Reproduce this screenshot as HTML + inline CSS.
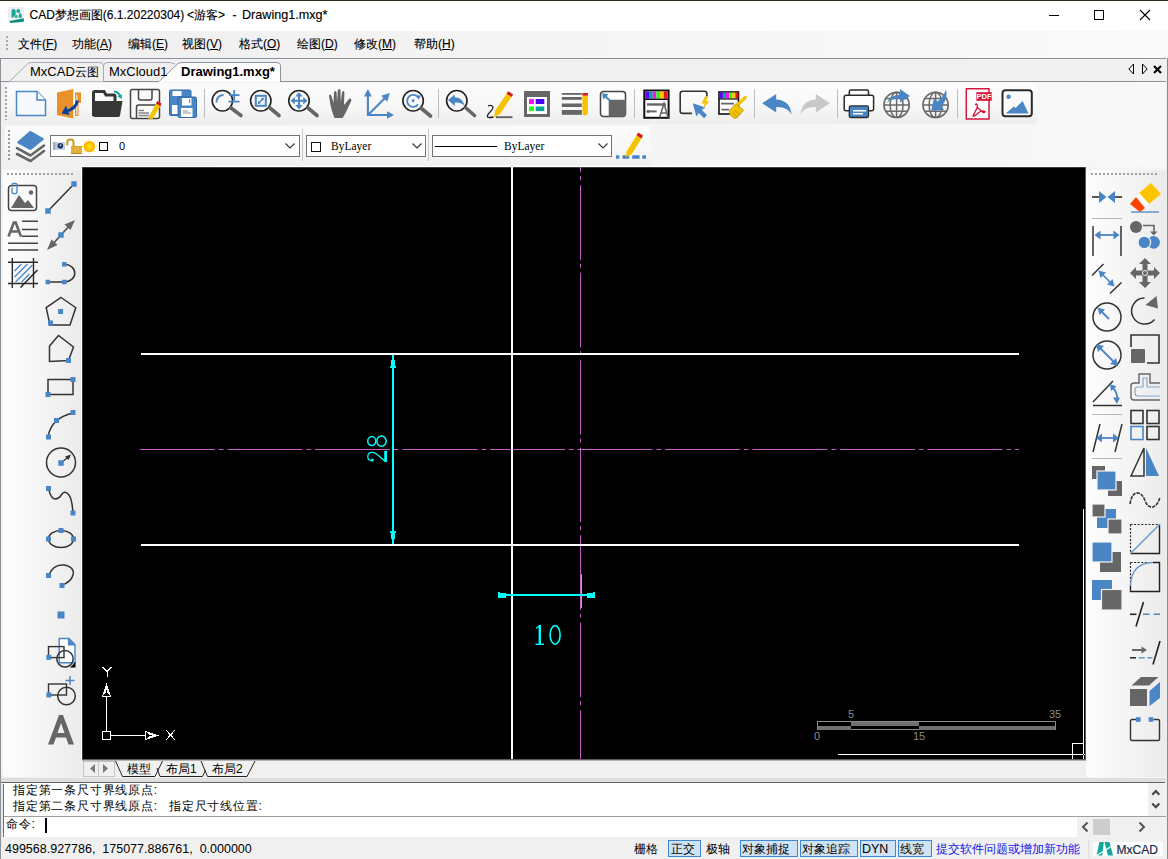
<!DOCTYPE html>
<html><head><meta charset="utf-8"><style>
html,body{margin:0;padding:0;}
body{width:1168px;height:859px;position:relative;overflow:hidden;background:#f0f0f0;font-family:"Liberation Sans",sans-serif;color:#000;}
.a{position:absolute;}
.t{position:absolute;white-space:nowrap;line-height:1;}
svg{position:absolute;overflow:visible;}

</style></head><body>
<div class="a" style="left:0;top:0;width:1168px;height:1px;background:#2c2c1c"></div>
<div class="a" style="left:0;top:1px;width:1168px;height:30px;background:#fff"></div>
<svg style="left:0;top:0" width="30" height="30" viewBox="0 0 30 30">
<rect x="8" y="7" width="16" height="15.5" fill="#efefef"/>
<path d="M11.5 17.5V11Q11.8 9 13.5 9Q15.5 9 15.6 11L15.8 14.5L12.8 17.8Z" fill="#17a897"/>
<path d="M16.5 12.5V10.5Q16.8 9 18.3 9Q20 9.2 20.2 11L19.5 13Z" fill="#17a897"/>
<path d="M18.6 17.7L18.8 14.5Q19.5 12.8 20.8 13.3Q22 14 21.8 17.7Z" fill="#17a897"/>
<path d="M14.2 17.7L15.2 15.5Q16.5 14.5 17.5 15.5L17.6 17.7Z" fill="#17a897"/>
<path d="M9.5 21L23.8 18.2V21.8L10.2 23Z" fill="#0e8c80"/>
</svg>
<div class="t" style="left:29.5px;top:9px;font-size:12px;-webkit-text-stroke:0.15px #000">CAD梦想画图(6.1.20220304)</div>
<div class="t" style="left:187px;top:9px;font-size:12px;-webkit-text-stroke:0.15px #000">&lt;游客&gt;</div>
<div class="t" style="left:232.5px;top:9px;font-size:12px;-webkit-text-stroke:0.15px #000">-</div>
<div class="t" style="left:242px;top:9px;font-size:12.6px;-webkit-text-stroke:0.15px #000">Drawing1.mxg*</div>
<div class="a" style="left:1049px;top:15px;width:10px;height:1px;background:#000"></div>
<div class="a" style="left:1094px;top:10px;width:8px;height:8px;border:1px solid #000"></div>
<svg style="left:1140px;top:10px" width="10" height="10" viewBox="0 0 10 10"><path d="M0 0L10 10M10 0L0 10" stroke="#000" stroke-width="1.1"/></svg>

<div class="a" style="left:0;top:31px;width:1168px;height:27px;background:linear-gradient(to right,#eeeeee,#f4f4f4 40%,#fafafa)"></div>
<div class="a" style="left:6px;top:36px;width:2px;height:15px;background:repeating-linear-gradient(#a8a8a8 0 2px,transparent 2px 4px)"></div>
<div class="t" style="left:18px;top:38px;font-size:12px;-webkit-text-stroke:0.12px #000">文件(<u>F</u>)</div>
<div class="t" style="left:72px;top:38px;font-size:12px;-webkit-text-stroke:0.12px #000">功能(<u>A</u>)</div>
<div class="t" style="left:128px;top:38px;font-size:12px;-webkit-text-stroke:0.12px #000">编辑(<u>E</u>)</div>
<div class="t" style="left:182px;top:38px;font-size:12px;-webkit-text-stroke:0.12px #000">视图(<u>V</u>)</div>
<div class="t" style="left:239px;top:38px;font-size:12px;-webkit-text-stroke:0.12px #000">格式(<u>O</u>)</div>
<div class="t" style="left:297px;top:38px;font-size:12px;-webkit-text-stroke:0.12px #000">绘图(<u>D</u>)</div>
<div class="t" style="left:354px;top:38px;font-size:12px;-webkit-text-stroke:0.12px #000">修改(<u>M</u>)</div>
<div class="t" style="left:414px;top:38px;font-size:12px;-webkit-text-stroke:0.12px #000">帮助(<u>H</u>)</div>

<div class="a" style="left:0;top:58px;width:1167px;height:1px;background:#8b929b"></div>
<div class="a" style="left:0;top:58px;width:1px;height:801px;background:#8b929b"></div>
<div class="a" style="left:1166px;top:58px;width:1px;height:801px;background:#f0f0f0"></div><div class="a" style="left:1167px;top:58px;width:1px;height:801px;background:#838b95"></div>
<div class="a" style="left:1px;top:59px;width:1165px;height:22px;background:#f0f0f0"></div>
<div class="a" style="left:1px;top:81px;width:1165px;height:1px;background:#8b929b"></div>
<svg style="left:0;top:58px" width="300" height="25" viewBox="0 0 300 25">
<path d="M9.5 23.5 L28 5.5 Q30 4.5 33 4.5 H100 Q103 4.5 103.5 8 V23.5" fill="#f0f0f0" stroke="#a7abb0" stroke-width="1"/>
<path d="M103.5 23.5 V8 Q104 4.5 107 4.5 H170 L175 6" fill="#f0f0f0" stroke="#a7abb0" stroke-width="1"/>
<path d="M159 23.5 L178 5.5 Q180 4.5 183 4.5 H276 Q280.5 4.5 280.5 8 V23.5 Z" fill="#fdfdfd" stroke="#8b929b" stroke-width="1"/>
<rect x="159" y="23" width="121" height="2" fill="#fdfdfd"/>
</svg>
<div class="t" style="left:30px;top:65px;font-size:13px">MxCAD<span style="font-size:12px">云图</span></div>
<div class="t" style="left:109px;top:65px;font-size:13px">MxCloud1</div>
<div class="t" style="left:181px;top:65px;font-size:13px;font-weight:bold">Drawing1.mxg*</div>
<svg style="left:1128px;top:63px" width="36" height="12" viewBox="0 0 36 12">
<path d="M5.5 1 V11 L0.8 6 Z" fill="none" stroke="#000" stroke-width="1"/>
<path d="M14.5 1 V11 L19.2 6 Z" fill="none" stroke="#000" stroke-width="1"/>
<path d="M26 3 L33 10 M33 3 L26 10" stroke="#000" stroke-width="2"/>
</svg>

<div class="a" style="left:1px;top:82px;width:1165px;height:85px;background:linear-gradient(to right,#f0f0f0,#f4f4f4 50%,#f8f8f8)"></div>
<div class="a" style="left:5px;top:83px;width:1032px;height:41px;border-radius:4px;background:linear-gradient(#fcfcfc,#f8f8f8 50%,#ededed)"></div>
<div class="a" style="left:5px;top:87px;width:2px;height:33px;background:repeating-linear-gradient(#a0a0a0 0 2px,transparent 2px 4px)"></div>
<div class="a" style="left:204px;top:89px;width:1px;height:29px;background:#bdbdbd"></div>
<div class="a" style="left:438px;top:89px;width:1px;height:29px;background:#bdbdbd"></div>
<div class="a" style="left:634px;top:89px;width:1px;height:29px;background:#bdbdbd"></div>
<div class="a" style="left:754px;top:89px;width:1px;height:29px;background:#bdbdbd"></div>
<div class="a" style="left:837px;top:89px;width:1px;height:29px;background:#bdbdbd"></div>
<div class="a" style="left:957px;top:89px;width:1px;height:29px;background:#bdbdbd"></div>
<svg style="left:15px;top:88px" width="32" height="32" viewBox="0 0 32 32"><path d="M1.5 3.5H22L30.5 12V27.5H1.5Z" fill="#f6f8fb" stroke="#4a86c5" stroke-width="1.5"/><path d="M22 3.5V12H30.5" fill="#fff" stroke="#4a86c5" stroke-width="1.5"/></svg>
<svg style="left:53px;top:88px" width="32" height="32" viewBox="0 0 32 32"><path d="M4 4.5L20.5 1V30.5L4 27Z" fill="#e8902a"/><rect x="20.5" y="2" width="1.5" height="28" fill="#fff"/><path d="M22 4.5H28V15H25.5V28H22Z" fill="#e8902a"/><rect x="23.3" y="7" width="1.2" height="20" fill="#fff" opacity="0.8"/><path d="M24.5 12.5Q23 21 12.5 23.5" fill="none" stroke="#0b3f9a" stroke-width="3"/><path d="M8.5 25.5L13 17.5L16.5 27Z" fill="#0b3f9a"/></svg>
<svg style="left:91px;top:88px" width="32" height="32" viewBox="0 0 32 32"><path d="M2.5 28V5Q2.5 3.5 4 3.5H13L15 7H22.5Q24 7 24 8.5V13" fill="none" stroke="#363636" stroke-width="3"/><path d="M2.5 13H31.5L29 27.5Q28.5 29 27 29H2.5Z" fill="#363636"/><path d="M23 3.5Q27.5 4 29 8" fill="none" stroke="#1aa59c" stroke-width="2.2"/><path d="M26.5 8.5L30.5 6L31 11Z" fill="#1aa59c"/></svg>
<svg style="left:129px;top:88px" width="32" height="32" viewBox="0 0 32 32"><rect x="1.5" y="1.5" width="29" height="29" rx="2" fill="#fafafa" stroke="#444" stroke-width="1.5"/><path d="M9.5 2V10Q9.5 12 11.5 12H21Q23 12 23 10V2" fill="none" stroke="#444" stroke-width="1.5"/><path d="M7.5 30V19Q7.5 17 9.5 17H28.5" fill="none" stroke="#444" stroke-width="1.5"/><path d="M9.5 22.5H15M9.5 25H20M9.5 27.5H20" stroke="#888" stroke-width="1.6"/><path d="M19 30.5L27 15.5L31.5 18L23.5 31Z" fill="#f5c400"/><path d="M27 15.5L28.3 13L32.5 15.5L31.5 18Z" fill="#d21a1a"/></svg>
<svg style="left:167px;top:88px" width="32" height="32" viewBox="0 0 32 32"><path d="M2.5 3.5Q2.5 2 4 2H22.5Q24 2 24 3.5V9H11V27.5H4Q2.5 27.5 2.5 26Z" fill="#4a86c5" stroke="#2f6aa8" stroke-width="1"/><rect x="5.5" y="3" width="9" height="5" fill="#fff"/><rect x="11" y="9" width="18.5" height="20.5" rx="1.5" fill="#4a86c5" stroke="#2f6aa8" stroke-width="1"/><rect x="15" y="10" width="9.5" height="7.5" fill="#fff"/><rect x="22" y="11" width="1.2" height="4" fill="#888"/><rect x="14" y="20" width="11.5" height="9" fill="#fff"/><path d="M16 23H21M16 25H24" stroke="#888" stroke-width="0.9"/><rect x="5" y="17" width="5.5" height="9" fill="#fff"/></svg>
<svg style="left:211px;top:88px" width="32" height="32" viewBox="0 0 32 32"><circle cx="11.4" cy="12.75" r="10.2" fill="none" stroke="#222" stroke-width="1.6"/><path d="M20 20L30 27.5" stroke="#666666" stroke-width="3.6" stroke-linecap="round"/><path d="M5.5 14.5Q5.5 7.5 12.5 7" fill="none" stroke="#4a86c5" stroke-width="1.8"/><path d="M18 7.2H28.5M23.2 2V12.5M17.5 13.7H28.5" stroke="#4a86c5" stroke-width="1.8"/></svg>
<svg style="left:249px;top:88px" width="32" height="32" viewBox="0 0 32 32"><circle cx="11.8" cy="12.75" r="10.2" fill="none" stroke="#222" stroke-width="1.6"/><path d="M21 20L30 27.5" stroke="#666666" stroke-width="3.6" stroke-linecap="round"/><rect x="6.8" y="7.8" width="10" height="10" fill="none" stroke="#4a86c5" stroke-width="2"/><path d="M9.5 15.2L14.2 10.5" stroke="#4a86c5" stroke-width="1.3"/><path d="M8.8 16L9.5 12.7L12 15.2Z M15 9.6L14.2 12.9L11.7 10.4Z" fill="#4a86c5"/></svg>
<svg style="left:287px;top:88px" width="32" height="32" viewBox="0 0 32 32"><circle cx="12" cy="12.75" r="10.2" fill="none" stroke="#222" stroke-width="1.6"/><path d="M21 20L30 27.5" stroke="#666666" stroke-width="3.6" stroke-linecap="round"/><path d="M12 6V19.5M5.2 12.75H18.8" stroke="#4a86c5" stroke-width="2.2"/><path d="M12 4.2L8.3 8.5H15.7Z M12 21.3L8.3 17H15.7Z M3.5 12.75L7.8 9V16.5Z M20.5 12.75L16.2 9V16.5Z" fill="#4a86c5"/></svg>
<svg style="left:325px;top:88px" width="32" height="32" viewBox="0 0 32 32"><path d="M9.5 30L8 26Q6.5 22 5.5 17L4 8Q4 6.5 5 6.5Q6 6.5 6.5 8L8.5 15L9 4.5Q9.2 3 10.3 3Q11.5 3 11.6 4.5L12 14L12.8 2.5Q13 1 14.2 1Q15.4 1 15.5 2.5L15.8 14L17 4.5Q17.2 3 18.3 3Q19.5 3.2 19.4 4.7L19 17L23.5 11.5Q25 10 26 11Q26.8 12 26 13.5L21 24Q19 28 17.5 30Z" fill="#666666"/></svg>
<svg style="left:363px;top:88px" width="32" height="32" viewBox="0 0 32 32"><path d="M4.9 27V8M4 27H24M5 27L22 10" fill="none" stroke="#4a86c5" stroke-width="2.1"/><path d="M4.9 1L1 8.5H8.8Z M31 27L24 23.2V30.8Z M26.8 5L18.2 7.8L24.2 13.8Z" fill="#4a86c5"/></svg>
<svg style="left:401px;top:88px" width="32" height="32" viewBox="0 0 32 32"><circle cx="12.1" cy="12.75" r="10.2" fill="none" stroke="#222" stroke-width="1.6"/><path d="M20.5 20.5L29.5 28" stroke="#666666" stroke-width="3.6" stroke-linecap="round"/><path d="M16.9 9.2A6 6 0 1 0 17 16.4" fill="none" stroke="#4a86c5" stroke-width="1.8"/><path d="M14.8 7.3L19.8 7.5L17.8 11.8Z" fill="#4a86c5"/><circle cx="12.1" cy="12.75" r="1.4" fill="#4a86c5"/></svg>
<svg style="left:445px;top:88px" width="32" height="32" viewBox="0 0 32 32"><circle cx="11.8" cy="12.75" r="10.2" fill="none" stroke="#222" stroke-width="1.6"/><path d="M21 20L29.5 27.5" stroke="#666666" stroke-width="3.6" stroke-linecap="round"/><path d="M9 9.3Q17.5 9 20 18.5Q16.5 13.8 9 14.8Z" fill="#4a86c5"/><path d="M3 12L9.8 6.5V18Z" fill="#4a86c5"/></svg>
<svg style="left:483px;top:88px" width="32" height="32" viewBox="0 0 32 32"><path d="M11 29.5L12 23L23.5 5.8L28.5 9L17 26Z" fill="#f5c400"/><path d="M23.5 5.8L25.2 3.2L30.2 6.4L28.5 9Z" fill="#d21a1a"/><path d="M5 17.8Q8.5 16.5 9.8 18.5Q10.5 20.5 7.5 23.5Q3.5 27.5 4.5 29Q6 30 10.5 29" fill="none" stroke="#222" stroke-width="1.3"/><path d="M13 29.2H29.5" stroke="#666666" stroke-width="2"/></svg>
<svg style="left:521px;top:88px" width="32" height="32" viewBox="0 0 32 32"><rect x="3" y="3" width="26" height="26" fill="#666666"/><rect x="6" y="9" width="20" height="17" fill="#fcfcfc"/><rect x="8" y="11" width="5" height="5" fill="#ff10f0"/><rect x="14.7" y="11" width="8.6" height="5" fill="#4a00ff"/><rect x="8" y="18.5" width="5" height="4.6" fill="#22ff10"/><rect x="14.7" y="18.5" width="8.6" height="4.6" fill="#00a89a"/></svg>
<svg style="left:559px;top:88px" width="32" height="32" viewBox="0 0 32 32"><rect x="2.8" y="5" width="20" height="1.8" fill="#666666"/><rect x="2.8" y="9" width="20" height="2.8" fill="#666666"/><rect x="2.8" y="15.5" width="20" height="3.5" fill="#666666"/><rect x="2.8" y="22" width="20" height="4.8" fill="#666666"/><path d="M23.4 7.6H28.9V24Q28.9 27.5 26.2 27.5Q23.4 27.5 23.4 24Z" fill="#f5c400"/><rect x="23.4" y="5" width="5.5" height="2.6" fill="#d21a1a"/></svg>
<svg style="left:597px;top:88px" width="32" height="32" viewBox="0 0 32 32"><rect x="3.5" y="3.5" width="25" height="25" rx="3" fill="#fdfdfd" stroke="#444" stroke-width="1.5"/><path d="M11.7 11.7H28.8V26Q28.8 28.8 26 28.8H11.7Z" fill="#666666"/><path d="M6.8 6.8L12.5 12.3" stroke="#4a86c5" stroke-width="2"/><path d="M5 5.2L11.5 6.2L6.2 11.5Z" fill="#4a86c5"/></svg>
<svg style="left:640px;top:88px" width="32" height="32" viewBox="0 0 32 32"><rect x="4.3" y="2.5" width="24.3" height="27.3" fill="#fff" stroke="#111" stroke-width="2"/><rect x="5.30" y="3.5" width="3.75" height="7.2" fill="#5a00ff"/><rect x="9.00" y="3.5" width="3.75" height="7.2" fill="#00a89a"/><rect x="12.70" y="3.5" width="3.75" height="7.2" fill="#ff10f0"/><rect x="16.40" y="3.5" width="3.75" height="7.2" fill="#22ff10"/><rect x="20.10" y="3.5" width="3.75" height="7.2" fill="#ffc400"/><rect x="23.80" y="3.5" width="3.75" height="7.2" fill="#e01818"/><path d="M4.3 11.3H28.6" stroke="#111" stroke-width="1.4"/><path d="M7 16.5H26" stroke="#666666" stroke-width="2.4"/><path d="M8 23.4H16.7" stroke="#666666" stroke-width="2"/><circle cx="8" cy="23.4" r="1.6" fill="#666666"/><path d="M19.5 29.5L24 15.5L28 29.5M21 25H26.8" fill="none" stroke="#666666" stroke-width="1.6"/></svg>
<svg style="left:679px;top:88px" width="32" height="32" viewBox="0 0 32 32"><path d="M13 25.4H3.7Q1.2 25.4 1.2 23V5.7Q1.2 3.2 3.7 3.2H25.4Q27.9 3.2 27.9 5.7V8.5" fill="none" stroke="#333" stroke-width="1.6"/><path d="M13.8 15.2L26.5 19.5L22.8 22L28 27.3L25 30.3L19.8 25L17.3 28.5Z" fill="#4a86c5"/><path d="M26 8.5L22.5 15.5H25.8L23.6 21L30.5 13.2H27L29.3 8.5Z" fill="#f5c400"/></svg>
<svg style="left:717px;top:88px" width="32" height="32" viewBox="0 0 32 32"><rect x="2" y="4" width="19.5" height="22" fill="#fff" stroke="#111" stroke-width="1.6"/><rect x="2.80" y="4.6" width="3.15" height="6" fill="#5a00ff"/><rect x="5.90" y="4.6" width="3.15" height="6" fill="#00a89a"/><rect x="9.00" y="4.6" width="3.15" height="6" fill="#ff10f0"/><rect x="12.10" y="4.6" width="3.15" height="6" fill="#22ff10"/><rect x="15.20" y="4.6" width="3.15" height="6" fill="#ffc400"/><rect x="18.30" y="4.6" width="3.15" height="6" fill="#e01818"/><path d="M2 11H21.5" stroke="#111" stroke-width="1.2"/><path d="M4 15.7H17M4.5 21.6H12" stroke="#666666" stroke-width="1.8"/><path d="M21.5 16L28.3 9.5" stroke="#f5c400" stroke-width="3.2" stroke-linecap="round"/><path d="M12.5 22.5L19 15.5L26.5 22.5L19.5 30Q17.5 31 15.5 29L12.5 26Z" fill="#f5c400" stroke="#b08000" stroke-width="0.7"/><path d="M15 24.5L20.5 29M17 22L23 27" stroke="#b08000" stroke-width="0.7"/></svg>
<svg style="left:761px;top:88px" width="32" height="32" viewBox="0 0 32 32"><path d="M1.2 15.2L15.2 5.9V11.4Q29 12 30.6 26.5Q27 18.5 15.2 18.9V24.4Z" fill="#4a86c5"/></svg>
<svg style="left:799px;top:88px" width="32" height="32" viewBox="0 0 32 32"><path d="M30.8 15.2L16.8 5.9V11.4Q3 12 1.4 26.5Q5 18.5 16.8 18.9V24.4Z" fill="#c8c8c8"/></svg>
<svg style="left:843px;top:88px" width="32" height="32" viewBox="0 0 32 32"><path d="M6.3 7.3V3.6Q6.3 2.1 7.8 2.1H24Q25.5 2.1 25.5 3.6V7.3" fill="#fff" stroke="#2a2a2a" stroke-width="1.5"/><rect x="1.2" y="7.3" width="29.4" height="15.4" rx="2" fill="#fff" stroke="#2a2a2a" stroke-width="1.5"/><rect x="6.3" y="17.9" width="19.2" height="11.6" rx="1.5" fill="#4a86c5" stroke="#2a2a2a" stroke-width="1.3"/><path d="M10 22.8H23M10 25.7H20" stroke="#fff" stroke-width="1.4"/></svg>
<svg style="left:880px;top:88px" width="32" height="32" viewBox="0 0 32 32"><circle cx="16.6" cy="16.9" r="12.6" fill="none" stroke="#6a6a6a" stroke-width="1.7"/><ellipse cx="16.6" cy="16.9" rx="6.5" ry="12.6" fill="none" stroke="#6a6a6a" stroke-width="1.5"/><path d="M16.6 4.3V29.5M4 16.9H29.2M5.8 10.5H27.4M5.8 23.3H27.4" stroke="#6a6a6a" stroke-width="1.5"/><path d="M7 15Q11 6 20 7V1L30 8L20 14.5V10.5Q12 10 7 15Z" fill="#4a86c5"/></svg>
<svg style="left:919px;top:88px" width="32" height="32" viewBox="0 0 32 32"><circle cx="16.6" cy="16.9" r="12.6" fill="none" stroke="#6a6a6a" stroke-width="1.7"/><ellipse cx="16.6" cy="16.9" rx="6.5" ry="12.6" fill="none" stroke="#6a6a6a" stroke-width="1.5"/><path d="M16.6 4.3V29.5M4 16.9H29.2M5.8 10.5H27.4M5.8 23.3H27.4" stroke="#6a6a6a" stroke-width="1.5"/><path d="M27 1.5Q29.5 11 22 18.5L25.5 21.8L12.2 22.5L15 10L18.5 13.5Q25 8 27 1.5Z" fill="#4a86c5"/></svg>
<svg style="left:962px;top:88px" width="32" height="32" viewBox="0 0 32 32"><path d="M4.3 0.8H27V31H4.3Z" fill="#fff" stroke="#d4163c" stroke-width="1.5"/><rect x="14.3" y="4.2" width="15.4" height="8.6" fill="#d4163c"/><text x="22" y="11.4" font-size="7.6" font-weight="bold" font-family="Liberation Sans" fill="#fff" text-anchor="middle">PDF</text><path d="M14 17Q13 16 14.5 16Q16 17 15 20L11.5 27Q10.5 28.5 12 28Q14 27 19 23Q22 22.5 23 23.8Q22.5 25 20.5 24L15 19" fill="none" stroke="#d4163c" stroke-width="1.4"/></svg>
<svg style="left:1001px;top:88px" width="32" height="32" viewBox="0 0 32 32"><rect x="1.5" y="2.2" width="29.3" height="26" rx="3" fill="#fafafa" stroke="#2a2a2a" stroke-width="2"/><circle cx="7.6" cy="8.7" r="2.2" fill="#4a86c5"/><path d="M4.5 25.5L13 18.5L14.5 20L21.6 13L27.5 25.5Z" fill="#4a86c5"/></svg>
<div class="a" style="left:5px;top:126px;width:646px;height:39px;border-radius:3px;background:linear-gradient(#fbfbfb,#f7f7f7 60%,#efefef)"></div>
<div class="a" style="left:8px;top:130px;width:2px;height:31px;background:repeating-linear-gradient(#9a9a9a 0 2px,transparent 2px 4px)"></div>
<svg style="left:0;top:126px" width="50" height="40" viewBox="0 126 50 40"><path d="M17 148.2L30.5 155.5L44 145.5" fill="none" stroke="#666666" stroke-width="2.6" stroke-linejoin="round" stroke-linecap="round"/><path d="M17 154L30.5 161L44 151" fill="none" stroke="#666666" stroke-width="2.6" stroke-linejoin="round" stroke-linecap="round"/><path d="M17.5 141.8L29.5 131.3Q30.3 130.7 31.2 131.2L43.4 138.2Q44.4 139 43.6 139.8L31.5 149.5Q30.6 150.3 29.6 149.7L17.6 143.2Q16.8 142.5 17.5 141.8Z" fill="#4a86c5"/></svg>
<div class="a" style="left:50px;top:135px;width:248px;height:20px;background:#fff;border:1px solid #747474"></div>
<svg style="left:285px;top:143px" width="10" height="6" viewBox="0 0 10 6"><path d="M0.5 0.5L5 5L9.5 0.5" fill="none" stroke="#333" stroke-width="1.1"/></svg>
<div class="a" style="left:302px;top:129px;width:1px;height:32px;background:#c8c8c8"></div>
<div class="a" style="left:306px;top:135px;width:118px;height:20px;background:#fff;border:1px solid #747474"></div>
<svg style="left:412px;top:143px" width="10" height="6" viewBox="0 0 10 6"><path d="M0.5 0.5L5 5L9.5 0.5" fill="none" stroke="#333" stroke-width="1.1"/></svg>
<div class="a" style="left:428px;top:129px;width:1px;height:32px;background:#c8c8c8"></div>
<div class="a" style="left:432px;top:135px;width:178px;height:20px;background:#fff;border:1px solid #747474"></div>
<svg style="left:598px;top:143px" width="10" height="6" viewBox="0 0 10 6"><path d="M0.5 0.5L5 5L9.5 0.5" fill="none" stroke="#333" stroke-width="1.1"/></svg>
<svg style="left:50px;top:136px" width="50" height="20" viewBox="50 136 50 20">
<defs><linearGradient id="eyeg" x1="0" y1="0" x2="1" y2="0"><stop offset="0" stop-color="#8aa4c4"/><stop offset="0.5" stop-color="#dfe6ee"/><stop offset="1" stop-color="#b9c8da"/></linearGradient><radialGradient id="sung"><stop offset="0" stop-color="#ffe600"/><stop offset="0.6" stop-color="#ffc800"/><stop offset="1" stop-color="#ff9a00"/></radialGradient></defs>
<rect x="53" y="142" width="12" height="8" fill="url(#eyeg)"/><circle cx="60.3" cy="145.8" r="2.9" fill="#1f3b70"/><circle cx="60.5" cy="145.3" r="0.8" fill="#fff"/>
<path d="M67.3 145.5V141.8Q67.3 139.6 70.4 139.6Q73.5 139.6 73.5 141.8V146" fill="none" stroke="#c89a22" stroke-width="2"/>
<rect x="71" y="146" width="11" height="7.8" fill="#d9a526"/><path d="M71 148H82M71 150H82M71 152H82" stroke="#f0cc5a" stroke-width="0.8"/><rect x="71" y="153" width="11" height="0.8" fill="#b07a10"/>
<circle cx="89.4" cy="146.5" r="5.6" fill="url(#sung)"/><g fill="#ffe000"><circle cx="89.4" cy="139.6" r="0.7"/><circle cx="89.4" cy="153.4" r="0.7"/><circle cx="82.5" cy="146.5" r="0.7"/><circle cx="96.3" cy="146.5" r="0.7"/><circle cx="84.5" cy="141.6" r="0.7"/><circle cx="94.3" cy="141.6" r="0.7"/><circle cx="84.5" cy="151.4" r="0.7"/><circle cx="94.3" cy="151.4" r="0.7"/></g>
</svg>
<div class="a" style="left:99px;top:142px;width:7px;height:7px;border:1.5px solid #000"></div>
<div class="t" style="left:119px;top:141px;font-size:11px">0</div>
<div class="a" style="left:311px;top:142px;width:8px;height:8px;border:1.2px solid #111"></div>
<div class="t" style="left:331px;top:141px;font-size:11.5px;font-family:'Liberation Serif',serif">ByLayer</div>
<div class="a" style="left:435px;top:146px;width:62px;height:1px;background:#000"></div>
<div class="t" style="left:504px;top:141px;font-size:11.5px;font-family:'Liberation Serif',serif">ByLayer</div>
<svg style="left:610px;top:128px" width="42" height="34" viewBox="610 128 42 34"><path d="M616 156.9H619.3M622.5 156.9H629.2M632.2 156.9H639.6M642.3 156.9H646" stroke="#4a86c5" stroke-width="3.5"/><path d="M626 157L626.5 151.5L636.5 135.5L641.5 138.5L631.5 154.5Z" fill="#f5c400"/><path d="M636.5 135.5L638 132.5L643 135.5L641.5 138.5Z" fill="#d21a1a"/></svg>
<div class="a" style="left:1px;top:167px;width:82px;height:611px;background:#f0f0f0"></div>
<div class="a" style="left:3px;top:170px;width:78px;height:607px;border-radius:3px;background:linear-gradient(to right,#fdfdfd,#f3f3f3 60%,#ebebeb)"></div>
<div class="a" style="left:7px;top:173px;width:68px;height:2px;background:repeating-linear-gradient(to right,#a0a0a0 0 2px,transparent 2px 4px)"></div>
<svg style="left:7px;top:181px" width="32" height="32" viewBox="0 0 32 32"><rect x="1.5" y="4.5" width="28" height="25" rx="3" fill="#fafafa" stroke="#444" stroke-width="1.5"/><circle cx="24" cy="11.5" r="2.2" fill="#666666"/><path d="M4 27L12 14L18 22L21 19L27 27Z" fill="#666666"/><path d="M5 6.5V3.8Q5 2.3 6.5 2.3H8.5Q10 2.3 10 3.8V10.5Q10 12.7 7.5 12.7Q5 12.7 5 10.5V7" fill="none" stroke="#4a86c5" stroke-width="1.3"/></svg>
<svg style="left:7px;top:219px" width="32" height="32" viewBox="0 0 32 32"><path d="M1.5 17.5L6.8 3.5H8.7L14 17.5M3.6 12.5H11.8" fill="none" stroke="#666666" stroke-width="2.6"/><path d="M15 2.2H31M15 10.5H31M15 17.3H31" stroke="#444" stroke-width="1.4"/><path d="M1 24.2H31M1 31H31" stroke="#444" stroke-width="1.6"/></svg>
<svg style="left:7px;top:257px" width="32" height="32" viewBox="0 0 32 32"><rect x="5.5" y="5.5" width="20.5" height="20.5" fill="#f6f7f9"/><path d="M7.5 14L14.5 7M7.5 20L20.5 7M8.5 25L25.5 8M14.5 25L22.5 17" stroke="#4a86c5" stroke-width="1.3"/><path d="M1 5.3H31M1 26.5H31M5.3 1V31M26.5 1V31" stroke="#2a2a2a" stroke-width="1.4"/><path d="M13.5 30.5L30.5 13" stroke="#222" stroke-width="1.4"/></svg>
<svg style="left:45px;top:181px" width="32" height="32" viewBox="0 0 32 32"><path d="M3 30L29 3" stroke="#333" stroke-width="1.5"/><rect x="0.25" y="27.25" width="5.5" height="5.5" fill="#4a86c5"/><rect x="26.25" y="0.25" width="5.5" height="5.5" fill="#4a86c5"/></svg>
<svg style="left:45px;top:219px" width="32" height="32" viewBox="0 0 32 32"><path d="M6 27L26 5" stroke="#555" stroke-width="1.8"/><path d="M30 1L19.5 5.5L25.5 11Z M2 31L6.5 20.5L12.5 26Z" fill="#666666"/><rect x="13.25" y="13.25" width="5.5" height="5.5" fill="#4a86c5"/></svg>
<svg style="left:45px;top:257px" width="32" height="32" viewBox="0 0 32 32"><path d="M2.8 25H19.3M19.3 7.3A10.5 8.85 0 0 1 19.3 25" fill="none" stroke="#333" stroke-width="1.5"/><rect x="0.5499999999999998" y="22.75" width="4.5" height="4.5" fill="#4a86c5"/><rect x="17.05" y="22.75" width="4.5" height="4.5" fill="#4a86c5"/><rect x="17.05" y="5.05" width="4.5" height="4.5" fill="#4a86c5"/></svg>
<svg style="left:45px;top:295px" width="32" height="32" viewBox="0 0 32 32"><path d="M16 2.5L30.8 12.7L25 30H5L1.2 12.7Z" fill="none" stroke="#333" stroke-width="1.5"/><rect x="13.1" y="14.0" width="5" height="5" fill="#4a86c5"/><rect x="3.0" y="25.5" width="5" height="5" fill="#4a86c5"/></svg>
<svg style="left:45px;top:333px" width="32" height="32" viewBox="0 0 32 32"><path d="M13.5 2.5L4.5 13V28.5L23.5 27.5L28.5 14Z" fill="none" stroke="#333" stroke-width="1.5"/><rect x="21.0" y="25.0" width="5" height="5" fill="#4a86c5"/></svg>
<svg style="left:45px;top:371px" width="32" height="32" viewBox="0 0 32 32"><rect x="3" y="8.5" width="25" height="15" fill="none" stroke="#333" stroke-width="1.5"/><rect x="0.5" y="21.0" width="5" height="5" fill="#4a86c5"/><rect x="25.5" y="6.0" width="5" height="5" fill="#4a86c5"/></svg>
<svg style="left:45px;top:409px" width="32" height="32" viewBox="0 0 32 32"><path d="M3 28Q6 9 28 4" fill="none" stroke="#333" stroke-width="1.5"/><rect x="1.0" y="25.5" width="5" height="5" fill="#4a86c5"/><rect x="9.0" y="9.0" width="5" height="5" fill="#4a86c5"/><rect x="25.5" y="1.0" width="5" height="5" fill="#4a86c5"/></svg>
<svg style="left:45px;top:447px" width="32" height="32" viewBox="0 0 32 32"><circle cx="16" cy="15.5" r="14.5" fill="none" stroke="#333" stroke-width="1.5"/><path d="M16 16L24.5 9" stroke="#333" stroke-width="1.3"/><path d="M26 7.5L20 9.5L23.5 13Z" fill="#333"/><rect x="13.25" y="13.25" width="5.5" height="5.5" fill="#4a86c5"/></svg>
<svg style="left:45px;top:485px" width="32" height="32" viewBox="0 0 32 32"><path d="M3.5 3.5Q6 14 10 14Q14 14 17 9Q20 5 24 10Q27 14 28 28" fill="none" stroke="#333" stroke-width="1.5"/><rect x="1.0" y="1.0" width="5" height="5" fill="#4a86c5"/><rect x="25.5" y="25.5" width="5" height="5" fill="#4a86c5"/></svg>
<svg style="left:45px;top:523px" width="32" height="32" viewBox="0 0 32 32"><ellipse cx="16" cy="16" rx="12.5" ry="8.5" fill="none" stroke="#333" stroke-width="1.5"/><rect x="1.0" y="13.5" width="5" height="5" fill="#4a86c5"/><rect x="13.5" y="5.0" width="5" height="5" fill="#4a86c5"/><rect x="26.0" y="13.5" width="5" height="5" fill="#4a86c5"/></svg>
<svg style="left:45px;top:561px" width="32" height="32" viewBox="0 0 32 32"><path d="M4 14Q8 3 19 4Q30 6 28 14Q26 21 17 24" fill="none" stroke="#333" stroke-width="1.5"/><rect x="1.0" y="12.0" width="5" height="5" fill="#4a86c5"/><rect x="14.5" y="22.0" width="5" height="5" fill="#4a86c5"/></svg>
<svg style="left:45px;top:599px" width="32" height="32" viewBox="0 0 32 32"><rect x="12.5" y="12.5" width="7" height="7" fill="#4a86c5"/></svg>
<svg style="left:45px;top:637px" width="32" height="32" viewBox="0 0 32 32"><path d="M14.2 1.5H24L30 7.5V25.8H14.2Z" fill="#fff" stroke="#4a86c5" stroke-width="1.4"/><path d="M23.5 1.5V8H30" fill="#4a86c5" stroke="#4a86c5" stroke-width="1.2"/><rect x="3.5" y="9.6" width="15.5" height="11" fill="none" stroke="#333" stroke-width="1.4"/><circle cx="20" cy="21.8" r="8.2" fill="none" stroke="#333" stroke-width="1.5"/><path d="M25 30.5L30.5 25V30.5Z" fill="#000"/><rect x="1.2999999999999998" y="17.8" width="5" height="5" fill="#4a86c5"/></svg>
<svg style="left:45px;top:675px" width="32" height="32" viewBox="0 0 32 32"><rect x="3.5" y="9" width="18" height="11" fill="none" stroke="#333" stroke-width="1.4"/><circle cx="21.5" cy="21" r="8.8" fill="none" stroke="#333" stroke-width="1.5"/><path d="M20.5 5.4H29.5M25 0.9V9.9" stroke="#4a86c5" stroke-width="1.5"/><rect x="1.4" y="17.4" width="5" height="5" fill="#4a86c5"/></svg>
<svg style="left:45px;top:713px" width="32" height="32" viewBox="0 0 32 32"><path d="M3 31.5L14 2H18L29 31.5H23.5L21 24.5H11L8.5 31.5Z M12.5 20H19.5L16 10Z" fill="#666666" fill-rule="evenodd"/></svg>
<div class="a" style="left:81px;top:166px;width:1005px;height:1px;background:#fff"></div>
<div class="a" style="left:81px;top:166px;width:1px;height:595px;background:#fff"></div>
<div class="a" style="left:82px;top:167px;width:1004px;height:593px;background:#3c3c3c"></div>
<div class="a" style="left:83px;top:168px;width:1002px;height:591px;background:#000"></div>
<div class="a" style="left:82px;top:759px;width:1004px;height:1px;background:#5c5c5c"></div>
<div class="a" style="left:82px;top:760px;width:1004px;height:1px;background:#b4b4b4"></div>
<div class="a" style="left:1085px;top:167px;width:1px;height:593px;background:#5c5c5c"></div>
<svg style="left:0;top:0" width="1168" height="859" viewBox="0 0 1168 859" shape-rendering="crispEdges">
<g fill="#c45ec4" shape-rendering="auto"><rect x="140.0" y="449" width="75.0" height="1"/><rect x="219.0" y="449" width="4.5" height="1"/><rect x="227.5" y="449" width="75.0" height="1"/><rect x="306.5" y="449" width="4.5" height="1"/><rect x="315.0" y="449" width="75.0" height="1"/><rect x="394.0" y="449" width="4.5" height="1"/><rect x="402.5" y="449" width="75.0" height="1"/><rect x="481.5" y="449" width="4.5" height="1"/><rect x="490.0" y="449" width="75.0" height="1"/><rect x="569.0" y="449" width="4.5" height="1"/><rect x="577.5" y="449" width="75.0" height="1"/><rect x="656.5" y="449" width="4.5" height="1"/><rect x="665.0" y="449" width="75.0" height="1"/><rect x="744.0" y="449" width="4.5" height="1"/><rect x="752.5" y="449" width="75.0" height="1"/><rect x="831.5" y="449" width="4.5" height="1"/><rect x="840.0" y="449" width="75.0" height="1"/><rect x="919.0" y="449" width="4.5" height="1"/><rect x="927.5" y="449" width="75.0" height="1"/><rect x="1006.5" y="449" width="4.5" height="1"/><rect x="1015.0" y="449" width="4.0" height="1"/><rect x="580" y="167.0" width="1" height="5.2"/><rect x="580" y="176.2" width="1" height="4.0"/><rect x="580" y="185.2" width="1" height="74.5"/><rect x="580" y="263.7" width="1" height="4.0"/><rect x="580" y="272.7" width="1" height="74.5"/><rect x="580" y="351.2" width="1" height="4.0"/><rect x="580" y="360.2" width="1" height="74.5"/><rect x="580" y="438.7" width="1" height="4.0"/><rect x="580" y="447.7" width="1" height="74.5"/><rect x="580" y="526.2" width="1" height="4.0"/><rect x="580" y="535.2" width="1" height="74.5"/><rect x="580" y="613.7" width="1" height="4.0"/><rect x="580" y="622.7" width="1" height="74.5"/><rect x="580" y="701.2" width="1" height="4.0"/><rect x="580" y="710.2" width="1" height="48.8"/></g>
<rect x="141" y="353" width="878" height="2" fill="#fff"/>
<rect x="141" y="544" width="878" height="2" fill="#fff"/>
<rect x="511" y="167" width="2" height="592" fill="#fff"/>
<g fill="#00ffff"><rect x="392" y="355" width="2" height="189"/><rect x="391" y="360" width="4" height="6"/><rect x="390" y="366" width="6" height="2"/><rect x="391" y="533" width="4" height="6"/><rect x="390" y="531" width="6" height="2"/><rect x="498" y="594" width="97" height="2"/><rect x="498" y="592" width="2" height="6"/><rect x="500" y="592.5" width="6" height="5"/><rect x="593" y="592" width="2" height="6"/><rect x="587" y="592.5" width="6" height="5"/><rect x="581" y="574" width="1" height="34"/></g>
<g fill="#fff"><rect x="838" y="754" width="245" height="1"/><rect x="1084" y="754" width="1" height="1"/><rect x="1083" y="509" width="1" height="245"/><rect x="1083" y="755" width="1" height="4"/><rect x="1072" y="743" width="1" height="16"/><rect x="1072" y="743" width="12" height="1"/></g>
<g><rect x="817.5" y="721.5" width="238" height="8" fill="none" stroke="#8c8c8c" stroke-width="1"/><rect x="851" y="722" width="68" height="4" fill="#707070"/><rect x="818" y="726" width="33" height="3.5" fill="#707070"/><rect x="919" y="726" width="136" height="3.5" fill="#707070"/></g>
<g fill="none" stroke="#fff" stroke-width="1"><rect x="102.5" y="731.5" width="8" height="8"/><path d="M106.5 731V696.5M111 735.5H145.5"/><path d="M102.5 696.5H110.5L106.5 685Z M104.5 694L106.5 688L108.5 694"/><path d="M145.5 731.5V739.5L157 735.5Z M148 733.5L154 735.5L148 737.5"/><path d="M102.5 667L107 671.5L111.5 667M107 671.5V677"/><path d="M166 730L175 740M175 730L166 740"/></g>
</svg>
<div class="t" style="left:848px;top:709px;font-size:11px;color:#8a8a8a">5</div>
<div class="t" style="left:1049px;top:709px;font-size:11px;color:#8a8a8a">35</div>
<div class="t" style="left:814px;top:731px;font-size:11px;color:#8c8c8c">0</div>
<div class="t" style="left:913px;top:731px;font-size:11px;color:#8a8a8a">15</div>
<svg style="left:0;top:0" width="1168" height="859" viewBox="0 0 1168 859"><g fill="none" stroke="#00ffff">
<path d="M536 628.2L540.2 625.3" stroke-width="1.3"/><rect x="538.6" y="625" width="2.4" height="20" fill="#00ffff" stroke="none"/><rect x="535.5" y="643.6" width="8.5" height="1.4" fill="#00ffff" stroke="none"/>
<ellipse cx="555.1" cy="634.9" rx="5" ry="9.3" stroke-width="1.6"/>
<g transform="translate(367 447) rotate(-90)"><ellipse cx="5.9" cy="4.75" rx="4.5" ry="4.0" stroke-width="1.5"/><ellipse cx="5.9" cy="14.5" rx="5.2" ry="4.7" stroke-width="1.5"/></g>
<g transform="translate(367 462.3) rotate(-90)"><path d="M2 5.5Q1.2 0.8 5.8 0.8Q10.2 1 10 5.2Q9.8 8.5 5.5 12.8L0.9 18.3" stroke-width="1.3"/><circle cx="2.3" cy="5.3" r="1.5" fill="#00ffff" stroke="none"/><rect x="0.4" y="17.2" width="11.1" height="2.8" fill="#00ffff" stroke="none"/></g>
</g></svg>
<div class="a" style="left:1086px;top:167px;width:80px;height:611px;background:#f4f4f4"></div>
<div class="a" style="left:1086px;top:170px;width:80px;height:607px;border-radius:3px;background:linear-gradient(to right,#fdfdfd,#f3f3f3 60%,#ebebeb)"></div>
<div class="a" style="left:1091px;top:173px;width:68px;height:2px;background:repeating-linear-gradient(to right,#a0a0a0 0 2px,transparent 2px 4px)"></div>
<div class="a" style="left:1092px;top:218px;width:30px;height:1px;background:#b8b8b8"></div>
<div class="a" style="left:1092px;top:414px;width:30px;height:1px;background:#b8b8b8"></div>
<div class="a" style="left:1092px;top:458px;width:30px;height:1px;background:#b8b8b8"></div>
<svg style="left:1091px;top:181px" width="32" height="32" viewBox="0 0 32 32"><path d="M1 16H9M23 16H31" stroke="#222" stroke-width="1.6"/><path d="M15.5 16L8 10V22Z M16.5 16L24 10V22Z" fill="#4a86c5"/></svg>
<svg style="left:1091px;top:225px" width="32" height="32" viewBox="0 0 32 32"><path d="M2 1V31M30 1V31" stroke="#333" stroke-width="1.5"/><path d="M6 10H26" stroke="#4a86c5" stroke-width="1.8"/><path d="M3.5 10L9.5 5.5V14.5Z M28.5 10L22.5 5.5V14.5Z" fill="#4a86c5"/></svg>
<svg style="left:1091px;top:263px" width="32" height="32" viewBox="0 0 32 32"><path d="M1 12.5L12.5 1M19 30.5L30.5 19.5" stroke="#333" stroke-width="1.5"/><path d="M11 11L20 20" stroke="#4a86c5" stroke-width="1.6"/><path d="M7.5 7.5L15 9.5L9.5 15Z M23.5 23.5L16 21.5L21.5 16Z" fill="#4a86c5"/></svg>
<svg style="left:1091px;top:301px" width="32" height="32" viewBox="0 0 32 32"><circle cx="16" cy="16" r="14" fill="none" stroke="#333" stroke-width="1.5"/><path d="M9 9L18 18" stroke="#4a86c5" stroke-width="1.8"/><path d="M6.5 6.5L14 8.5L8.5 14Z" fill="#4a86c5"/></svg>
<svg style="left:1091px;top:339px" width="32" height="32" viewBox="0 0 32 32"><circle cx="16" cy="16" r="14" fill="none" stroke="#333" stroke-width="1.5"/><path d="M8 8L24 24" stroke="#4a86c5" stroke-width="1.8"/><path d="M5 5L13 7L7 13Z M27 27L19 25L25 19Z" fill="#4a86c5"/></svg>
<svg style="left:1091px;top:375px" width="32" height="32" viewBox="0 0 32 32"><path d="M2 27L22 6M2 30.5H31" stroke="#333" stroke-width="1.5"/><path d="M21 12Q27 17 26 25" fill="none" stroke="#4a86c5" stroke-width="1.8"/><path d="M19 9L25.5 11.5L20 16Z M26 29L22 22.5H29Z" fill="#4a86c5"/></svg>
<svg style="left:1091px;top:421px" width="32" height="32" viewBox="0 0 32 32"><path d="M2 31L9 3M24 31L31 3" stroke="#333" stroke-width="1.5"/><path d="M9 17H24" stroke="#4a86c5" stroke-width="1.8"/><path d="M5 17L11 12.5V21.5Z M28 17L22 12.5V21.5Z" fill="#4a86c5"/></svg>
<svg style="left:1091px;top:465px" width="32" height="32" viewBox="0 0 32 32"><rect x="1" y="1" width="13" height="13" fill="#666666"/><rect x="17" y="16" width="14" height="15" fill="#666666"/><rect x="6" y="6" width="19" height="19" fill="#4a86c5" stroke="#f5f5f5" stroke-width="1.2"/></svg>
<svg style="left:1091px;top:503px" width="32" height="32" viewBox="0 0 32 32"><rect x="6" y="6" width="19" height="19" fill="#4a86c5"/><rect x="1" y="1" width="13" height="13" fill="#666666" stroke="#f5f5f5" stroke-width="1.2"/><rect x="17" y="16" width="14" height="15" fill="#666666" stroke="#f5f5f5" stroke-width="1.2"/></svg>
<svg style="left:1091px;top:541px" width="32" height="32" viewBox="0 0 32 32"><rect x="9" y="11" width="21" height="20" fill="#666666"/><rect x="1" y="1" width="20" height="20" fill="#4a86c5" stroke="#f5f5f5" stroke-width="1.2"/></svg>
<svg style="left:1091px;top:579px" width="32" height="32" viewBox="0 0 32 32"><rect x="1" y="1" width="20" height="20" fill="#4a86c5"/><rect x="10.5" y="10.5" width="20.5" height="20.5" fill="#666666" stroke="#f0f0f0" stroke-width="1.2"/></svg>
<svg style="left:1129px;top:181px" width="32" height="32" viewBox="0 0 32 32"><path d="M10 12L22 2L32 13L20 23Z" fill="#ffc400"/><path d="M5 18L10 12L20 23L14 29Z" fill="#fff"/><path d="M1 23L7 16L16 27L11 31Z" fill="#ff4400"/><path d="M2 31H30" stroke="#4a86c5" stroke-width="1.3"/></svg>
<svg style="left:1129px;top:219px" width="32" height="32" viewBox="0 0 32 32"><circle cx="7" cy="8" r="6" fill="#666666"/><path d="M14 6.5H25V13" fill="none" stroke="#666666" stroke-width="1.6"/><path d="M21 12.5H28.5L24.8 16.5Z" fill="#666666"/><circle cx="24.6" cy="23.4" r="6.3" fill="#4a86c5"/><circle cx="15.3" cy="23.4" r="6.3" fill="#4a86c5" stroke="#f5f5f5" stroke-width="1.2"/></svg>
<svg style="left:1129px;top:257px" width="32" height="32" viewBox="0 0 32 32"><path d="M16 1L22 7H18.5V13.5H25V10L31 16L25 22V18.5H18.5V25H22L16 31L10 25H13.5V18.5H7V22L1 16L7 10V13.5H13.5V7H10Z" fill="#666666"/><circle cx="16" cy="16" r="2.5" fill="none" stroke="#eee" stroke-width="1"/></svg>
<svg style="left:1129px;top:295px" width="32" height="32" viewBox="0 0 32 32"><path d="M25.5 24.4A13 13 0 1 1 15.5 3" fill="none" stroke="#333" stroke-width="1.5"/><path d="M16.5 10L27.5 1L29 13.5Z" fill="#666666"/></svg>
<svg style="left:1129px;top:333px" width="32" height="32" viewBox="0 0 32 32"><path d="M2 14V2H30V30H18" fill="none" stroke="#333" stroke-width="1.6"/><rect x="2" y="16" width="14" height="14" rx="1" fill="#666666"/></svg>
<svg style="left:1129px;top:371px" width="32" height="32" viewBox="0 0 32 32"><path d="M31 12H21V3H10V12H5Q2 12 2 15V26Q2 29 5 29H31" fill="none" stroke="#666666" stroke-width="1.4"/><path d="M31 16H18V7H14V16H9Q6 16 6 19V22Q6 25 9 25H31" fill="none" stroke="#86a9cc" stroke-width="1.2"/></svg>
<svg style="left:1129px;top:409px" width="32" height="32" viewBox="0 0 32 32"><rect x="2" y="1.5" width="12" height="13" fill="none" stroke="#333" stroke-width="1.6"/><rect x="18" y="1.5" width="12" height="13" fill="none" stroke="#333" stroke-width="1.6"/><rect x="2" y="17.5" width="12" height="13" fill="none" stroke="#4a86c5" stroke-width="1.6"/><rect x="18" y="17.5" width="12" height="13" fill="none" stroke="#333" stroke-width="1.6"/></svg>
<svg style="left:1129px;top:447px" width="32" height="32" viewBox="0 0 32 32"><path d="M15 1V29H2Z" fill="none" stroke="#333" stroke-width="1.5"/><path d="M17 1L30 29H17Z" fill="#4a86c5"/></svg>
<svg style="left:1129px;top:485px" width="32" height="32" viewBox="0 0 32 32"><path d="M1 19Q3 7 9 8Q14 9 16 16Q19 23 24 22Q29 20 31 12" fill="none" stroke="#333" stroke-width="1.6" stroke-dasharray="3.5 1"/></svg>
<svg style="left:1129px;top:523px" width="32" height="32" viewBox="0 0 32 32"><path d="M1.5 1.5H30.5M1.5 1.5V30.5" fill="none" stroke="#222" stroke-width="1.2" stroke-dasharray="2 1.6"/><path d="M30.5 1.5V30.5H1.5" fill="none" stroke="#222" stroke-width="1.4"/><path d="M1.5 30.5L30.5 1.5" stroke="#6a9acb" stroke-width="1.4"/></svg>
<svg style="left:1129px;top:561px" width="32" height="32" viewBox="0 0 32 32"><path d="M1.5 1.5H24M1.5 1.5V25" fill="none" stroke="#222" stroke-width="1.2" stroke-dasharray="2 1.6"/><path d="M24 1.5H30.5V30.5H1.5V25" fill="none" stroke="#222" stroke-width="1.4"/><path d="M1.5 25Q2 2 24 1.5" fill="none" stroke="#6a9acb" stroke-width="1.3"/></svg>
<svg style="left:1129px;top:599px" width="32" height="32" viewBox="0 0 32 32"><path d="M1 15.3H7.5" stroke="#222" stroke-width="1.6"/><path d="M14 15.3H20.5M24.5 15.3H31" stroke="#4a86c5" stroke-width="1.5"/><path d="M14.5 3L7 27.5" stroke="#222" stroke-width="1.6"/></svg>
<svg style="left:1129px;top:636px" width="32" height="32" viewBox="0 0 32 32"><path d="M3 14H14" stroke="#666666" stroke-width="2"/><path d="M18 14L12.5 10.5V17.5Z" fill="#666666"/><path d="M1 21.8H7" stroke="#333" stroke-width="1.6"/><path d="M9.8 21.8H15.8M18.2 21.8H23.5" stroke="#6a9acb" stroke-width="1.6"/><path d="M31 5L24 28.5" stroke="#222" stroke-width="1.6"/></svg>
<svg style="left:1129px;top:675px" width="32" height="32" viewBox="0 0 32 32"><path d="M2.5 10.5L12 2H29.5L20 10.5Z" fill="#666666"/><rect x="1" y="14" width="17" height="17" fill="#666666"/><path d="M20.5 16L31 7V23L20.5 31Z" fill="#4a86c5"/></svg>
<svg style="left:1129px;top:713px" width="32" height="32" viewBox="0 0 32 32"><path d="M7 6.5H3Q1.5 6.5 1.5 8V26Q1.5 27.5 3 27.5H29Q30.5 27.5 30.5 26V8Q30.5 6.5 29 6.5H24.5" fill="none" stroke="#333" stroke-width="1.4"/><rect x="7.000000000000001" y="4.2" width="4.6" height="4.6" fill="#4a86c5"/><rect x="19.7" y="4.2" width="4.6" height="4.6" fill="#4a86c5"/></svg>
<div class="a" style="left:82px;top:761px;width:1004px;height:16px;background:#f0f0f0"></div>
<div class="a" style="left:83px;top:761px;width:30px;height:14px;border:1px solid #c4c4c4;background:#f0f0f0"></div>
<div class="a" style="left:98px;top:762px;width:1px;height:14px;background:#c4c4c4"></div>
<svg style="left:83px;top:760px" width="180" height="18" viewBox="0 0 180 18">
<path d="M7 8.5L12 4V13Z" fill="#7a7a7a"/><path d="M20 4V13L25 8.5Z" fill="#7a7a7a"/>
<path d="M32.5 1L39.5 16.5H72L79.5 1" fill="none" stroke="#222" stroke-width="1"/>
<path d="M74 8L77 16.5H119.5L122.5 10" fill="none" stroke="#222" stroke-width="1"/>
<path d="M118 1L124.5 16.5H164L172 1" fill="none" stroke="#222" stroke-width="1"/>
</svg>
<div class="t" style="left:127px;top:763px;font-size:12px">模型</div>
<div class="t" style="left:166px;top:763px;font-size:12px">布局1</div>
<div class="t" style="left:212px;top:763px;font-size:12px">布局2</div>
<div class="a" style="left:1px;top:778px;width:1165px;height:4px;background:#dedede"></div>
<div class="a" style="left:1px;top:782px;width:1164px;height:2px;background:#646464"></div>
<div class="a" style="left:1px;top:783px;width:1147px;height:33px;background:#fff"></div>
<div class="a" style="left:1148px;top:783px;width:18px;height:33px;background:#f0f0f0"></div>
<svg style="left:1150px;top:788px" width="12" height="26" viewBox="0 0 12 26"><path d="M2.3 6.8L5.8 3L9.3 6.8M2.3 15.5L5.8 19.3L9.3 15.5" fill="none" stroke="#444" stroke-width="2.1"/></svg>
<div class="a" style="left:1px;top:816px;width:1165px;height:1px;background:#a0a0a0"></div>
<div class="a" style="left:1px;top:817px;width:1076px;height:20px;background:#fff"></div>
<div class="a" style="left:1077px;top:817px;width:71px;height:20px;background:#f0f0f0"></div>
<div class="a" style="left:1093px;top:819px;width:17px;height:16px;background:#cdcdcd"></div>
<svg style="left:1081px;top:821px" width="66" height="12" viewBox="0 0 66 12"><path d="M6.5 1.5L2 6L6.5 10.5M58.5 1.5L63 6L58.5 10.5" fill="none" stroke="#555" stroke-width="2"/></svg>
<div class="a" style="left:1148px;top:817px;width:18px;height:20px;background:#f0f0f0"></div>
<div class="t" style="left:13px;top:783.5px;font-size:12px;letter-spacing:0.8px">指定第一条尺寸界线原点<span style="letter-spacing:0">:</span></div>
<div class="t" style="left:13px;top:799.5px;font-size:12px;letter-spacing:0.8px">指定第二条尺寸界线原点<span style="letter-spacing:0">:</span></div>
<div class="t" style="left:169px;top:799.5px;font-size:12px;letter-spacing:0.8px">指定尺寸线位置<span style="letter-spacing:0">:</span></div>
<div class="t" style="left:6px;top:818px;font-size:12px;letter-spacing:0.8px">命令<span style="letter-spacing:0">:</span></div>
<div class="a" style="left:1px;top:784px;width:2px;height:53px;background:#e6e6e6"></div>
<div class="a" style="left:3px;top:784px;width:1px;height:53px;background:#707070"></div>
<div class="a" style="left:45px;top:818px;width:2px;height:15px;background:#000"></div>
<div class="a" style="left:1px;top:837px;width:1165px;height:22px;background:#f0f0f0"></div>
<div class="t" style="left:5px;top:843px;font-size:12.5px">499568.927786,&nbsp; 175077.886761,&nbsp; 0.000000</div>
<div class="t" style="left:634px;top:843px;font-size:12px">栅格</div>
<div class="a" style="left:668px;top:840px;width:31px;height:15px;border:1px solid #3c86d2;background:#cfe3f6"></div>
<div class="t" style="left:671px;top:843px;font-size:12px">正交</div>
<div class="t" style="left:706px;top:843px;font-size:12px">极轴</div>
<div class="a" style="left:740px;top:840px;width:56px;height:15px;border:1px solid #3c86d2;background:#cfe3f6"></div>
<div class="t" style="left:742px;top:843px;font-size:12px">对象捕捉</div>
<div class="a" style="left:800px;top:840px;width:56px;height:15px;border:1px solid #3c86d2;background:#cfe3f6"></div>
<div class="t" style="left:802px;top:843px;font-size:12px">对象追踪</div>
<div class="a" style="left:860px;top:840px;width:34px;height:15px;border:1px solid #3c86d2;background:#cfe3f6"></div>
<div class="t" style="left:862px;top:843px;font-size:12.5px">DYN</div>
<div class="a" style="left:898px;top:840px;width:32px;height:15px;border:1px solid #3c86d2;background:#cfe3f6"></div>
<div class="t" style="left:900px;top:843px;font-size:12px">线宽</div>
<div class="t" style="left:936px;top:843px;font-size:12px;color:#1414e6">提交软件问题或增加新功能</div>
<div class="a" style="left:1088px;top:840px;width:1px;height:18px;background:#dcdcdc"></div>
<div class="a" style="left:1093px;top:842px;width:70px;height:14px;background:#fdfdfd"></div>
<svg style="left:1086px;top:838px" width="30" height="21" viewBox="1086 838 30 21"><path d="M1096.5 855.5L1099.5 842H1103.8L1102.3 855.5Z" fill="#13a89e"/><path d="M1104.5 842H1109.5L1113 855.5H1108L1105.5 846Z" fill="#13a89e"/><path d="M1095.5 856.3L1112 846" stroke="#fdfdfd" stroke-width="1.2"/></svg>
<div class="t" style="left:1116.5px;top:843.5px;font-size:12px;color:#1b2b4b;-webkit-text-stroke:0.2px #1b2b4b">MxCAD</div>

</body></html>
